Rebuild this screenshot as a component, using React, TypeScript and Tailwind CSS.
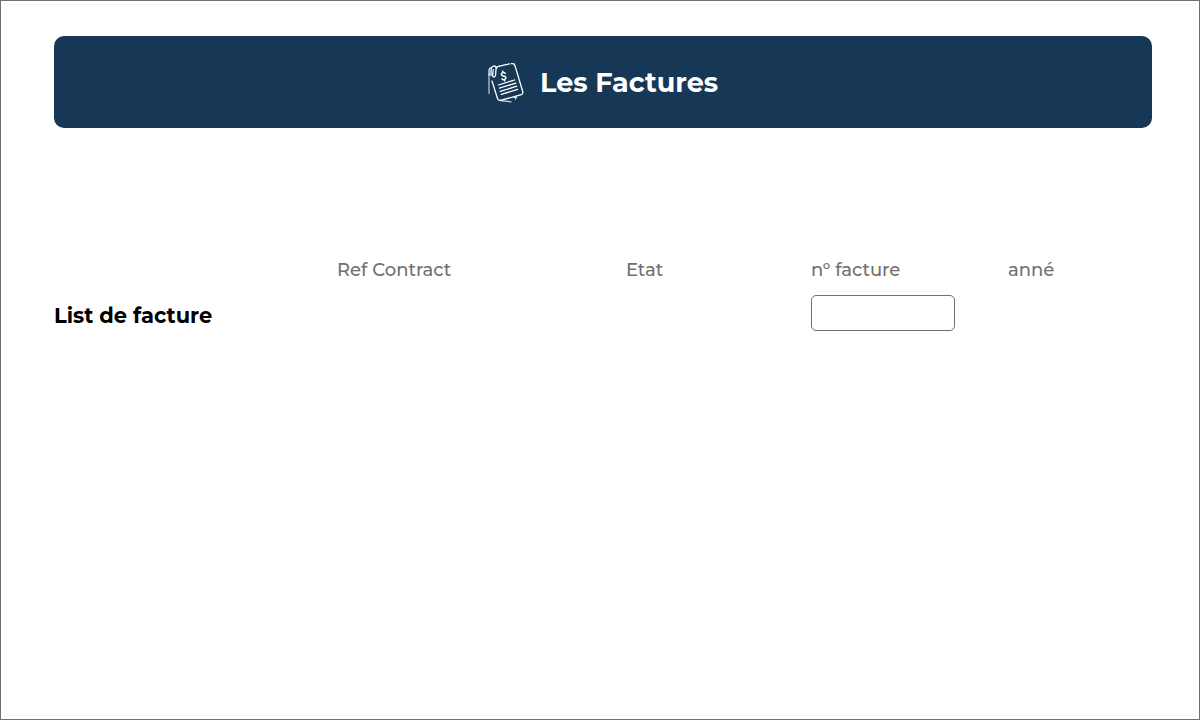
function InvoiceIcon() {
  return (
    <svg
      viewBox="0 0 36 40"
      className="h-10 w-9 shrink-0"
      fill="none"
      stroke="white"
      strokeWidth="1.3"
      strokeLinecap="round"
      strokeLinejoin="round"
      aria-hidden="true"
    >
      <path d="M9.4 3.6 L21.4 0.9 M23.4 0.6 L26 0.9 L27.2 3.4 L34.8 28.8 Q35.2 30.8 33.4 31.6 L12.6 37.4 Q10.4 37.8 9.6 35.8 L4 18" />
      <path d="M1 11 V30.5" strokeWidth="1.2" opacity="0.75" />
      <path d="M1 12 V7 Q1.6 4.8 3.4 4.4" opacity="0.9" />
      <path d="M3 12.4 V7.4 Q3.4 3 6.2 2.8 Q8.3 3 8 6 L7.6 11.8 Q7.2 14.2 5.6 14 Q4.4 13.6 4.6 12 L5.2 6.6 M8 6 L9.4 3.6" />
      <path d="M12.6 37.6 L23 38.8 M26 34.4 H28.6 M27.6 33.4 V36" opacity="0.8" />
      <path
        d="M17.2 10.4 C16.6 9.1 14.8 9.3 14 10 C12.8 11.1 13.4 12.6 15 12.9 C16.8 13.2 18.2 13.7 17.8 15.3 C17.3 16.9 14.8 17.2 14 15.8 M14.8 8.2 L15.1 9.4 M16.4 16.7 L16.7 17.8"
        strokeWidth="1.5"
      />
      <path
        d="M10.4 22 L26.6 17 M11.4 25.2 L27.8 20.1 M12.2 28.4 L28.8 23.2 M13.2 31.4 L29.6 26.4"
        strokeWidth="1.3"
      />
    </svg>
  );
}

const fieldClass = "flex flex-col items-start gap-[13px] text-lg leading-6 font-medium text-[#707070]";

export default function App() {
  return (
    <main className="min-h-screen border border-[#707070] bg-white pt-[35px] pr-[47px] pl-[53px] font-['Montserrat','Inter',sans-serif]">
      <header className="flex items-center justify-center gap-4 rounded-[10px] bg-[#173756] pt-[27px] pb-[25px]">
        <InvoiceIcon />
        <h1 className="text-[27px] leading-10 font-bold text-white">Les Factures</h1>
      </header>

      <section className="mt-[130px] grid grid-cols-[283fr_289fr_185fr_197fr_144fr]">
        <h2 className="self-end text-[21px] leading-[30px] font-bold text-black">
          List de facture
        </h2>
        <div className={fieldClass}>Ref Contract</div>
        <div className={fieldClass}>Etat</div>
        <div className={fieldClass}>
          <label htmlFor="invoice-number">nº facture</label>
          <input
            id="invoice-number"
            type="text"
            className="h-9 w-36 rounded-[5px] border border-[#707070] bg-white px-3 text-base outline-none focus:border-[#173756]"
          />
        </div>
        <div className={fieldClass}>anné</div>
      </section>
    </main>
  );
}
